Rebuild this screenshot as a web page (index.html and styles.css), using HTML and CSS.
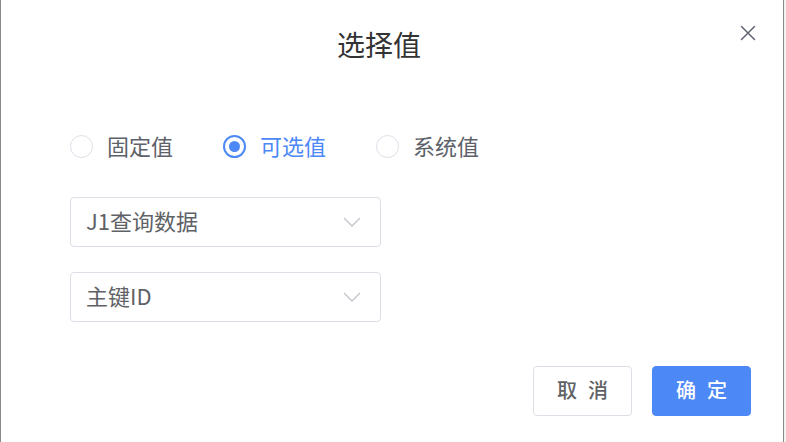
FILE: index.html
```html
<!DOCTYPE html>
<html lang="zh-CN">
<head>
    <meta charset="UTF-8">
    <meta name="viewport" content="width=device-width, initial-scale=1.0">
    <title>选择值</title>
    <link rel="stylesheet" href="styles.css">
</head>
<body>
    <div class="dialog">
        <div class="dialog-header">
            <span class="dialog-title">选择值</span>
            <button class="dialog-close" aria-label="关闭">
                <svg width="16" height="16" viewBox="0 0 16 16">
                    <path d="M1.5 1.5 L14.5 14.5 M14.5 1.5 L1.5 14.5" stroke="#5f6470" stroke-width="1.5" fill="none" stroke-linecap="round"/>
                </svg>
            </button>
        </div>

        <div class="dialog-body">
            <div class="radio-group">
                <label class="radio">
                    <span class="radio-circle"></span>
                    <span class="radio-label">固定值</span>
                </label>
                <label class="radio checked">
                    <span class="radio-circle"></span>
                    <span class="radio-label">可选值</span>
                </label>
                <label class="radio">
                    <span class="radio-circle"></span>
                    <span class="radio-label">系统值</span>
                </label>
            </div>

            <div class="select">
                <span class="select-value">J1查询数据</span>
                <svg class="select-arrow" width="18" height="10" viewBox="0 0 18 10">
                    <path d="M1 1 L9 9 L17 1" stroke="#c0c4cc" stroke-width="1.3" fill="none"/>
                </svg>
            </div>

            <div class="select">
                <span class="select-value">主键ID</span>
                <svg class="select-arrow" width="18" height="10" viewBox="0 0 18 10">
                    <path d="M1 1 L9 9 L17 1" stroke="#c0c4cc" stroke-width="1.3" fill="none"/>
                </svg>
            </div>
        </div>

        <div class="dialog-footer">
            <button class="btn">取消</button>
            <button class="btn btn-primary">确定</button>
        </div>
    </div>
</body>
</html>
```

FILE: styles.css
```css
html, body {
    margin: 0;
    padding: 0;
}
body {
    background-color: #f2f2f2;
    font-family: "Noto Sans CJK SC", "Noto Sans", sans-serif;
    color: #606266;
}
.dialog {
    position: relative;
    width: 782px;
    height: 442px;
    background-color: #fff;
    border-left: 1px solid #8a8a8a;
    border-right: 1px solid #8a8a8a;
    display: flex;
    flex-direction: column;
}
.dialog-header {
    padding-top: 27px;
    text-align: center;
}
.dialog-title {
    display: inline-block;
    font-size: 28px;
    line-height: 34px;
    color: #333;
    margin-right: 26px;
}
.dialog-close {
    position: absolute;
    top: 25px;
    right: 27px;
    width: 16px;
    height: 16px;
    padding: 0;
    border: none;
    background: none;
    cursor: pointer;
}
.dialog-close svg {
    display: block;
}
.dialog-body {
    padding-left: 69px;
}
.radio-group {
    display: flex;
    align-items: center;
    margin-top: 73px;
    height: 24px;
}
.radio {
    display: flex;
    align-items: center;
    margin-right: 50px;
    cursor: pointer;
}
.radio-circle {
    box-sizing: border-box;
    width: 23px;
    height: 23px;
    border: 1px solid #dcdfe6;
    border-radius: 50%;
    display: flex;
    align-items: center;
    justify-content: center;
}
.radio-label {
    margin-left: 14px;
    margin-bottom: 3px;
    font-size: 22px;
    line-height: 24px;
    color: #5d6169;
}
.radio.checked .radio-circle {
    border: 2px solid #4d88f7;
}
.radio.checked .radio-circle::after {
    content: "";
    width: 11px;
    height: 11px;
    border-radius: 50%;
    background-color: #4d88f7;
}
.radio.checked .radio-label {
    color: #4d88f7;
}
.select {
    box-sizing: border-box;
    width: 311px;
    height: 50px;
    border: 1px solid #dcdfe6;
    border-radius: 4px;
    display: flex;
    align-items: center;
    justify-content: space-between;
    padding: 0 19px 0 15px;
    margin-top: 39px;
}
.select + .select {
    margin-top: 25px;
}
.select-value {
    font-size: 22px;
    margin-bottom: 5px;
    color: #606266;
}
.select-arrow {
    display: block;
}
.dialog-footer {
    display: flex;
    justify-content: flex-end;
    gap: 20px;
    padding-right: 32px;
    margin-top: 44px;
}
.btn {
    box-sizing: border-box;
    width: 99px;
    height: 50px;
    border: 1px solid #dcdfe6;
    border-radius: 4px;
    background-color: #fff;
    font-family: inherit;
    font-size: 20px;
    font-weight: 500;
    letter-spacing: 11px;
    padding: 0 0 3px 11px;
    color: #606266;
    cursor: pointer;
}
.btn-primary {
    background-color: #4d88f7;
    border-color: #4d88f7;
    color: #fff;
}
```
